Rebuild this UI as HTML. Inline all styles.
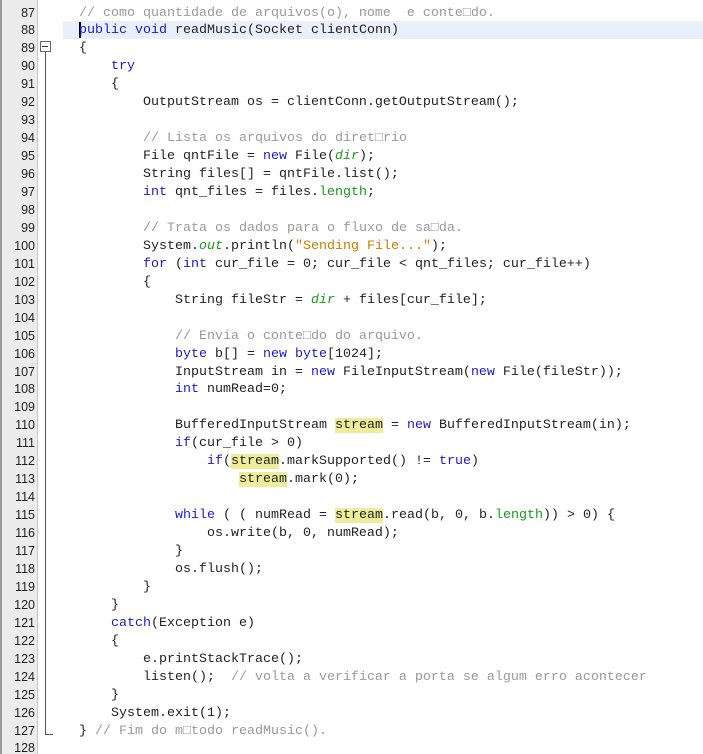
<!DOCTYPE html>
<html><head><meta charset="utf-8"><style>
html,body{margin:0;padding:0;background:#fff;width:703px;height:754px;overflow:hidden}
body{position:relative;font-family:"Liberation Mono","Courier New",monospace;font-size:13.33px;color:#222}
.gut{position:absolute;left:0;top:0;width:38px;height:754px;background:#ececec;border-left:2px solid #999;border-right:1px solid #c8c8c8;box-sizing:border-box}
.ln{position:absolute;left:0;width:35px;text-align:right;font-family:"Liberation Sans",Arial,sans-serif;font-size:12.5px;color:#222}
.code{position:absolute;left:79px;white-space:pre;height:18px;line-height:18px}
.hl{position:absolute;left:63px;right:0;top:21px;height:18px;background:#e9f0fb}
.k{color:#1a1ad0}.c{color:#9a9a9a}.s{color:#ce7b00}.f{color:#1a9a1a}.i{font-style:italic}
.m{background:#eded9a}
</style></head><body>
<div class="gut"></div>
<div class="hl"></div>
<div style="position:absolute;left:79px;top:22px;width:2px;height:16px;background:#000"></div>
<div style="position:absolute;left:40px;top:41px;width:9px;height:9px;border:1px solid #666;background:#fff"></div>
<div style="position:absolute;left:42px;top:46px;width:6px;height:1px;background:#333"></div>
<div style="position:absolute;left:45px;top:52px;width:1px;height:683px;background:#555"></div>
<div style="position:absolute;left:45px;top:734px;width:8px;height:1px;background:#555"></div>
<div id="L"></div>
<script>
var lines=[
'<span class="c">// como quantidade de arquivos(o), nome  e conte□do.</span>',
'<span class="k">public</span> <span class="k">void</span> readMusic(Socket clientConn)',
'{',
'    <span class="k">try</span>',
'    {',
'        OutputStream os = clientConn.getOutputStream();',
'',
'        <span class="c">// Lista os arquivos do diret□rio</span>',
'        File qntFile = <span class="k">new</span> File(<span class="f i">dir</span>);',
'        String files[] = qntFile.list();',
'        <span class="k">int</span> qnt_files = files.<span class="f">length</span>;',
'',
'        <span class="c">// Trata os dados para o fluxo de sa□da.</span>',
'        System.<span class="f i">out</span>.println(<span class="s">"Sending File..."</span>);',
'        <span class="k">for</span> (<span class="k">int</span> cur_file = 0; cur_file &lt; qnt_files; cur_file++)',
'        {',
'            String fileStr = <span class="f i">dir</span> + files[cur_file];',
'',
'            <span class="c">// Envia o conte□do do arquivo.</span>',
'            <span class="k">byte</span> b[] = <span class="k">new</span> <span class="k">byte</span>[1024];',
'            InputStream in = <span class="k">new</span> FileInputStream(<span class="k">new</span> File(fileStr));',
'            <span class="k">int</span> numRead=0;',
'',
'            BufferedInputStream <span class="m">stream</span> = <span class="k">new</span> BufferedInputStream(in);',
'            <span class="k">if</span>(cur_file &gt; 0)',
'                <span class="k">if</span>(<span class="m">stream</span>.markSupported() != <span class="k">true</span>)',
'                    <span class="m">stream</span>.mark(0);',
'',
'            <span class="k">while</span> ( ( numRead = <span class="m">stream</span>.read(b, 0, b.<span class="f">length</span>)) &gt; 0) {',
'                os.write(b, 0, numRead);',
'            }',
'            os.flush();',
'        }',
'    }',
'    <span class="k">catch</span>(Exception e)',
'    {',
'        e.printStackTrace();',
'        listen();  <span class="c">// volta a verificar a porta se algum erro acontecer</span>',
'    }',
'    System.exit(1);',
'} <span class="c">// Fim do m□todo readMusic().</span>',
''];
var h='';
for(var i=0;i<lines.length;i++){var t=4.5+i*17.95;
h+='<div class="ln" style="top:'+(t+1)+'px">'+(87+i)+'</div><div class="code" style="top:'+t+'px">'+lines[i]+'</div>';}
document.getElementById('L').innerHTML=h;
</script>
</body></html>
